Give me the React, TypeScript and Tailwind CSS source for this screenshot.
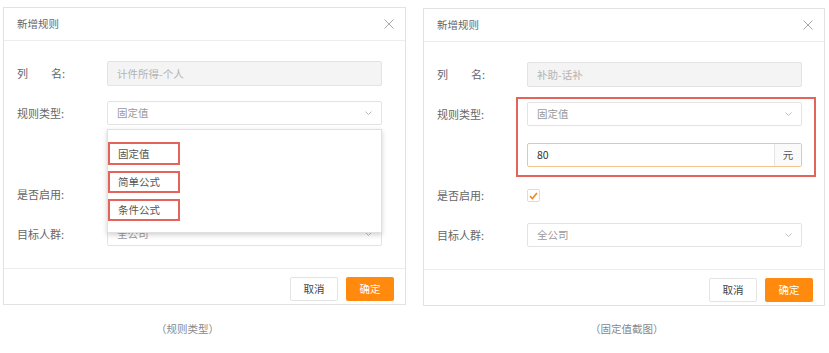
import React from "react";

const FONT = { fontFamily: '"Noto Sans CJK SC", "Noto Sans", sans-serif' };

function CloseIcon() {
  return (
    <svg width="10" height="10" viewBox="0 0 10 10" className="block">
      <path d="M0.5 0.5 L9.5 9.5 M9.5 0.5 L0.5 9.5" stroke="#a8a8a8" strokeWidth="1" fill="none" />
    </svg>
  );
}

function Chevron() {
  return (
    <svg width="7" height="4" viewBox="0 0 7 4" className="block">
      <path d="M0.5 0.5 L3.5 3.5 L6.5 0.5" stroke="#b5b5b5" strokeWidth="0.9" fill="none" />
    </svg>
  );
}

function Label({ children }: { children: React.ReactNode }) {
  return <div className="w-[90px] shrink-0 text-[11px] text-[#666]">{children}</div>;
}

function NameLabel() {
  return (
    <div className="w-[90px] shrink-0 text-[11px] text-[#666] flex">
      <span className="w-[45px] flex justify-between">
        <span>列</span>
        <span>名</span>
      </span>
      <span>:</span>
    </div>
  );
}

function Select({ value }: { value: string }) {
  return (
    <div className="w-[275px] h-[24px] border border-[#e3e3e3] rounded-[2px] bg-white flex items-center justify-between pl-[9px] pr-[9px]">
      <span className="text-[10.5px] text-[#9a9a9a]">{value}</span>
      <Chevron />
    </div>
  );
}

function Dialog({
  name,
  width,
  open,
  className,
}: {
  name: string;
  width: string;
  open: boolean;
  className?: string;
}) {
  return (
    <div className={`relative ${width} border border-[#e2e2e2] bg-white ${className ?? ""}`}>
      <div className="h-[33px] border-b border-[#ededed] flex items-center justify-between pl-[13px] pr-[11px]">
        <span className="text-[10.5px] text-[#666]">新增规则</span>
        <CloseIcon />
      </div>
      <div className="pl-[13px] pt-[20px] pb-[22px] flex flex-col">
        <div className="flex items-center">
          <NameLabel />
          <div className="w-[275px] h-[25px] border border-[#e3e3e3] rounded-[2px] bg-[#f4f4f4] flex items-center pl-[9px]">
            <span className="text-[10.5px] text-[#b3b3b3]">{name}</span>
          </div>
        </div>
        <div className="flex items-center mt-[15px]">
          <Label>规则类型:</Label>
          <div className="relative">
            <Select value="固定值" />
            {open && (
              <div className="absolute left-0 top-[28px] w-[275px] h-[104px] z-10 bg-white border border-[#e0e0e0] shadow-[0_2px_5px_rgba(0,0,0,0.18)] flex flex-col gap-[6px] pt-[12px]">
                <div className="w-[72px] h-[23px] border-2 border-[#e2645a] flex items-center pl-[8px] text-[10.5px] text-[#555]">
                  固定值
                </div>
                <div className="w-[72px] h-[22px] border-2 border-[#e2645a] flex items-center pl-[8px] text-[10.5px] text-[#555]">
                  简单公式
                </div>
                <div className="w-[72px] h-[22px] border-2 border-[#e2645a] flex items-center pl-[8px] text-[10.5px] text-[#555]">
                  条件公式
                </div>
              </div>
            )}
          </div>
        </div>
        <div className="flex items-center mt-[17px]">
          <div className="w-[90px] shrink-0" />
          <div
            className={`w-[275px] h-[24px] border border-[#f3c48c] rounded-[2px] bg-white flex items-stretch ${
              open ? "invisible" : ""
            }`}
          >
            <div className="flex-1 flex items-center pl-[9px] text-[10.5px] text-[#333]">80</div>
            <div className="w-[27px] border-l border-[#e6e6e6] bg-[#fafafa] flex items-center justify-center text-[10.5px] text-[#555]">
              元
            </div>
          </div>
        </div>
        <div className="flex items-center mt-[22px] h-[13px]">
          <Label>是否启用:</Label>
          <div className="w-[13px] h-[13px] border border-[#dcdcdc] rounded-[2px] bg-white flex items-center justify-center">
            <svg width="9" height="8" viewBox="0 0 9 8" className="block">
              <path d="M1 4.2 L3.4 6.5 L8 1" stroke="#f08a1c" strokeWidth="1.6" fill="none" />
            </svg>
          </div>
        </div>
        <div className="flex items-center mt-[21px]">
          <Label>目标人群:</Label>
          <Select value="全公司" />
        </div>
      </div>
      <div className="border-t border-[#ededed] pt-[8px] pb-[3px] pr-[11px] flex justify-end gap-[8px]">
        <div className="w-[48px] h-[24px] border border-[#e3e3e3] rounded-[2px] bg-white flex items-center justify-center text-[10.5px] text-[#444]">
          取消
        </div>
        <div className="w-[48px] h-[24px] rounded-[2px] bg-[#ff8a0d] flex items-center justify-center text-[10.5px] text-white">
          确定
        </div>
      </div>
      {!open && (
        <div className="absolute left-[92px] top-[88px] w-[300px] h-[80px] border-2 border-[#e2645a] pointer-events-none" />
      )}
    </div>
  );
}

export default function App() {
  return (
    <div className="w-[829px] h-[353px] bg-white pt-[7px] pl-[3px] flex items-start gap-[17px]" style={FONT}>
      <div className="flex flex-col">
        <Dialog name="计件所得-个人" width="w-[403px]" open={true} />
        <div className="mt-[17px] pl-[153px] text-[10.5px] leading-[14px] text-[#888]">（规则类型）</div>
      </div>
      <div className="flex flex-col mt-[1px]">
        <Dialog name="补助-话补" width="w-[402px]" open={false} />
        <div className="mt-[16px] pl-[167px] text-[10.5px] leading-[14px] text-[#888]">（固定值截图）</div>
      </div>
    </div>
  );
}
